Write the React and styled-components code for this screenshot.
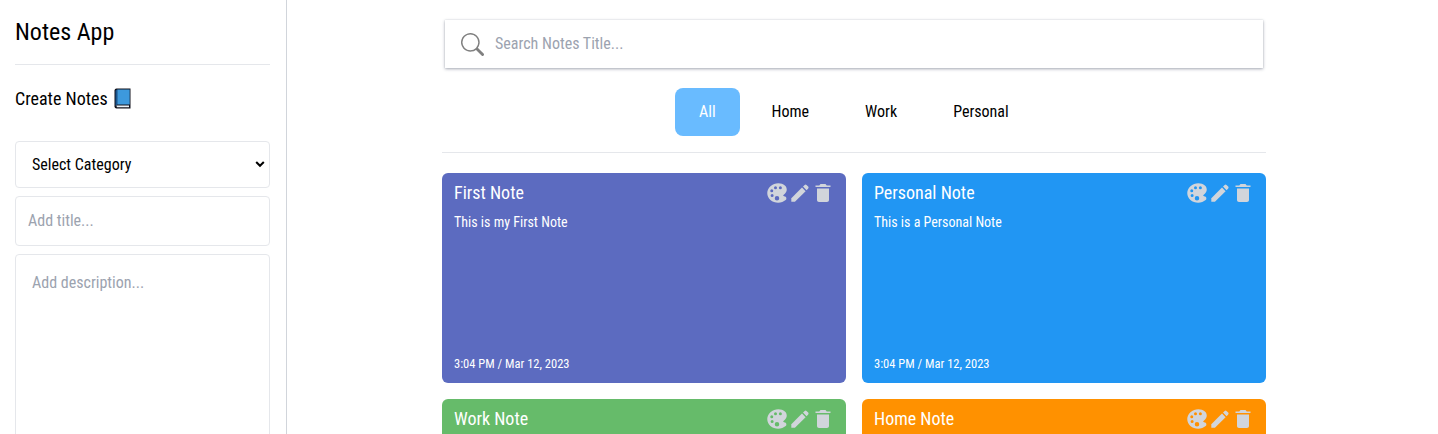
import React from 'react';
import styled, { createGlobalStyle } from 'styled-components';
import { IoMdTrash } from 'react-icons/io';
import { IoColorPalette } from 'react-icons/io5';
import { BsSearch } from 'react-icons/bs';

const GlobalStyle = createGlobalStyle`
  *, *::before, *::after { box-sizing: border-box; }
  html, body { margin: 0; height: 100%; overflow: hidden; background: #fff; }
  body, input, select, textarea, button {
    font-family: 'Roboto Condensed', Roboto, sans-serif;
    font-size: 16px;
    line-height: 24px;
    color: #000;
  }
  h1, h2, h3, p { margin: 0; font-weight: 400; }
  svg { display: block; }
`;

const Page = styled.div`
  display: flex;
  height: 100vh;
  overflow: hidden;
`;

const Sidebar = styled.aside`
  flex: 0 0 287px;
  padding: 16px 16px 0 15px;
  border-right: 1px solid #d1d5db;
`;

const AppTitle = styled.h1`
  height: 49px;
  border-bottom: 1px solid #e5e7eb;
  font-size: 24px;
  line-height: 32px;
`;

const FormTitle = styled.h2`
  display: flex;
  align-items: center;
  gap: 6px;
  margin: 20px 0 28px;
  font-size: 18px;
  line-height: 28px;

  svg { margin-bottom: 1px; }
`;

const Form = styled.form`
  display: flex;
  flex-direction: column;
  gap: 8px;
`;

const fieldBox = `
  width: 100%;
  border: 1px solid #e5e7eb;
  border-radius: 4px;
  background: #fff;
  outline: none;
  &::placeholder { color: #9ca3af; opacity: 1; }
`;

const SelectWrap = styled.div`
  position: relative;
`;

const CategorySelect = styled.select`
  ${fieldBox}
  display: block;
  appearance: none;
  height: 47px;
  padding: 0 16px;
`;

const Chevron = styled.svg`
  position: absolute;
  top: 19px;
  right: 5px;
  pointer-events: none;
`;

const TitleInput = styled.input`
  ${fieldBox}
  height: 50px;
  padding: 0 12px 2px;
`;

const DescriptionInput = styled.textarea`
  ${fieldBox}
  height: 240px;
  padding: 16px;
  resize: none;
`;

const Main = styled.main`
  flex: 1;
  padding-top: 20px;
`;

const Content = styled.div`
  width: 824px;
  margin-left: 155px;
`;

const SearchBar = styled.label`
  display: flex;
  align-items: center;
  gap: 11px;
  height: 48px;
  margin: 0 3px;
  padding-left: 16px;
  color: #808080;
  box-shadow: rgba(60, 64, 90, 0.45) 0 1px 3px, rgba(60, 64, 90, 0.18) 0 0 1px;
`;

const SearchInput = styled.input`
  flex: 1;
  border: 0;
  padding: 0;
  outline: none;
  background: transparent;
  &::placeholder { color: #9ca3af; opacity: 1; }
`;

const Tabs = styled.nav`
  display: flex;
  gap: 8px;
  height: 85px;
  padding: 20px 0 0 233px;
  border-bottom: 1px solid #e5e7eb;
`;

const Tab = styled.button`
  height: 48px;
  padding: 0 24px;
  border: 0;
  border-radius: 8px;
  background: ${({ $active }) => ($active ? '#69bbff' : 'transparent')};
  color: ${({ $active }) => ($active ? '#fff' : '#000')};
`;

const NoteGrid = styled.section`
  display: grid;
  grid-template-columns: repeat(2, 404px);
  grid-auto-rows: 210px;
  gap: 16px;
  margin-top: 20px;
`;

const Card = styled.article`
  display: flex;
  flex-direction: column;
  padding: 6px 12px 7px;
  border-radius: 6px;
  background: ${({ $color }) => $color};
  color: #fff;
`;

const CardHeader = styled.header`
  display: flex;
  justify-content: space-between;
`;

const CardTitle = styled.h3`
  font-size: 18px;
  line-height: 28px;
`;

const Actions = styled.div`
  display: flex;
  align-items: center;
  margin: 0 -0.6px 1px 0;
  color: #d1d5db;
`;

const CardBody = styled.p`
  flex: 1;
  margin-top: 5px;
  font-size: 14px;
  line-height: 20px;
`;

const Timestamp = styled.p`
  font-size: 12.5px;
  line-height: 24px;
`;

const notes = [
  { title: 'First Note', text: 'This is my First Note', color: '#5c6bc0' },
  { title: 'Personal Note', text: 'This is a Personal Note', color: '#2196f3' },
  { title: 'Work Note', text: 'This is a Work Note', color: '#66bb6a' },
  { title: 'Home Note', text: 'This is a Home Note', color: '#ff9100' },
];

const BookIcon = () => (
  <svg width="17" height="21" viewBox="0 0 17 21">
    <path d="M2.5.5H16.5V20.5H2.5Q.5 20.5.5 18.5V2.5Q.5.5 2.5.5Z" fill="#12121c" />
    <path d="M1.5 2.5L3.3 1.5V16.5L1.5 18Z" fill="#17548f" />
    <path d="M3.3 1.5H15.7V16.5H3.3Z" fill="#3d99dd" />
    <path d="M2.3 17.6H15V19.3H3Z" fill="#e9f1f8" />
  </svg>
);

const PencilIcon = () => (
  <svg width="22" height="22" viewBox="0 0 22 22" fill="currentColor">
    <path d="M2.3 16.3L13 5.6L16.6 9.2L5.9 19.8H2.3Z" />
    <path d="M14 4.6L15.7 2.9Q16.5 2.1 17.5 2.9L19.2 4.6Q20 5.5 19.2 6.4L17.6 8.2Z" />
  </svg>
);

const NoteCard = ({ note }) => (
  <Card $color={note.color}>
    <CardHeader>
      <CardTitle>{note.title}</CardTitle>
      <Actions>
        <IoColorPalette size={24} />
        <PencilIcon />
        <IoMdTrash size={24} />
      </Actions>
    </CardHeader>
    <CardBody>{note.text}</CardBody>
    <Timestamp>3:04 PM / Mar 12, 2023</Timestamp>
  </Card>
);

export default function App() {
  return (
    <Page>
      <GlobalStyle />
      <Sidebar>
        <AppTitle>Notes App</AppTitle>
        <FormTitle>Create Notes <BookIcon /></FormTitle>
        <Form>
          <SelectWrap>
            <CategorySelect defaultValue="">
              <option value="">Select Category</option>
              <option>Home</option>
              <option>Work</option>
              <option>Personal</option>
            </CategorySelect>
            <Chevron width="10" height="8" viewBox="0 0 10 8">
              <path d="M1.2 2L5 5.8L8.8 2" fill="none" stroke="#000" strokeWidth="2" />
            </Chevron>
          </SelectWrap>
          <TitleInput placeholder="Add title..." />
          <DescriptionInput placeholder="Add description..." />
        </Form>
      </Sidebar>
      <Main>
        <Content>
          <SearchBar>
            <BsSearch size={23} />
            <SearchInput placeholder="Search Notes Title..." />
          </SearchBar>
          <Tabs>
            {['All', 'Home', 'Work', 'Personal'].map((name) => (
              <Tab key={name} $active={name === 'All'}>{name}</Tab>
            ))}
          </Tabs>
          <NoteGrid>
            {notes.map((note) => <NoteCard key={note.title} note={note} />)}
          </NoteGrid>
        </Content>
      </Main>
    </Page>
  );
}
